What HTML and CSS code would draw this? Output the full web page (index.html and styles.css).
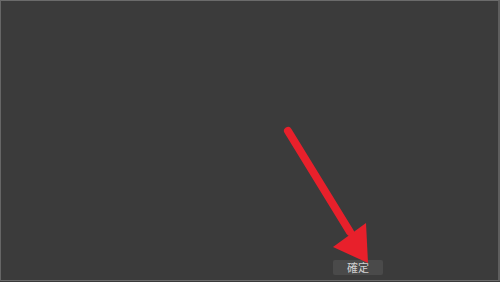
FILE: index.html
```html
<!DOCTYPE html>
<html>
<head>
<meta charset="utf-8">
<link rel="stylesheet" href="styles.css">
</head>
<body>
<div class="frame">
  <div class="content"></div>
  <div class="footer">
    <button class="ok">確定</button>
  </div>
  <svg class="arrow" width="500" height="282" viewBox="0 0 500 282">
    <line x1="288" y1="131" x2="350" y2="232" stroke="#e8202b" stroke-width="8" stroke-linecap="round"/>
    <polygon points="333,247 366,223 368,263" fill="#e8202b"/>
  </svg>
</div>
</body>
</html>
```
FILE: styles.css
```css
html, body {
  margin: 0;
  padding: 0;
  background: #393939;
  width: 500px;
  height: 282px;
  overflow: hidden;
}
.frame {
  position: relative;
  box-sizing: border-box;
  width: 500px;
  height: 281px;
  background: #3b3b3b;
  border-top: 1px solid #6b6b6b;
  border-left: 1px solid #666666;
  border-right: 2px solid #5e5e5e;
  border-bottom: 1px solid #6a6a6a;
  display: flex;
  flex-direction: column;
}
.content {
  flex: 1;
}
.footer {
  display: flex;
  justify-content: flex-start;
  padding: 0 0 5px 332px;
}
.ok {
  width: 50px;
  height: 15px;
  padding: 0;
  margin: 0;
  border: none;
  border-radius: 2px;
  background: #4a4a4a;
  color: #d0d0d0;
  font-family: "Noto Sans CJK TC", "Noto Sans CJK SC", sans-serif;
  font-size: 11px;
  line-height: 15px;
  text-align: center;
}
.arrow {
  position: absolute;
  left: -1px;
  top: -1px;
  pointer-events: none;
}
```
